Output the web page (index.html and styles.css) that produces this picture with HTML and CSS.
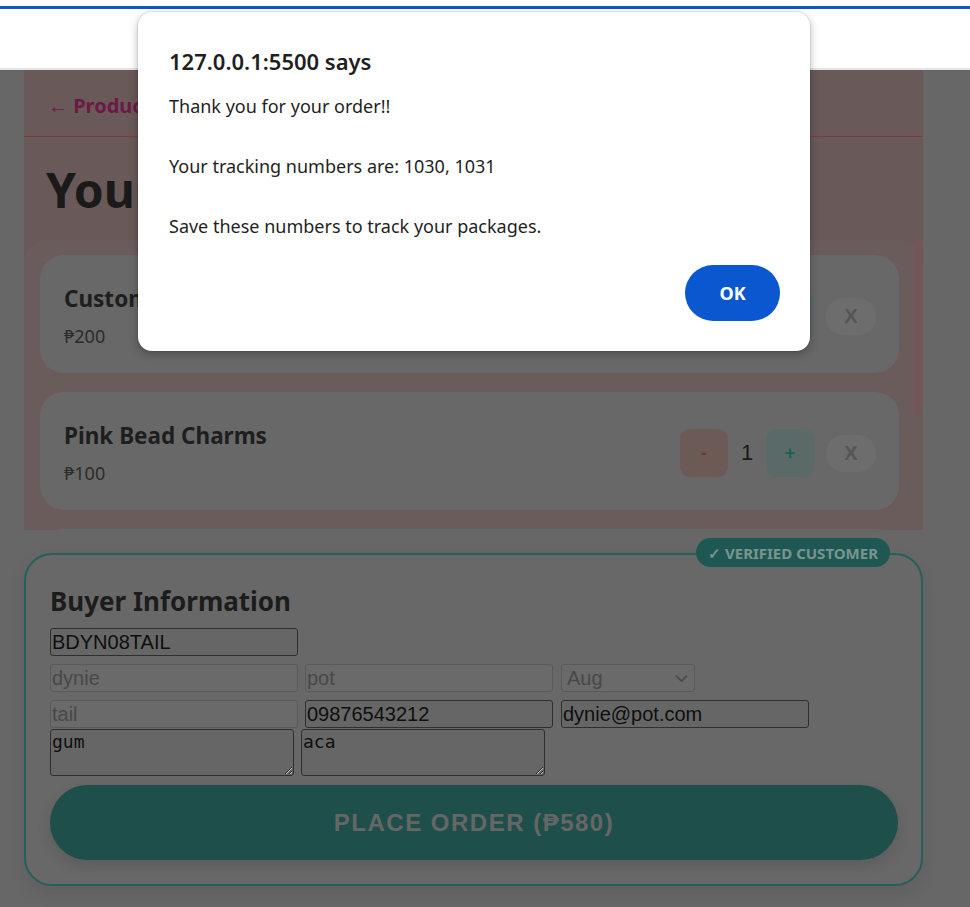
FILE: index.html
```html
<!DOCTYPE html>
<html lang="en">
<head>
    <meta charset="UTF-8">
    <meta name="viewport" content="width=device-width, initial-scale=1.0">
    <title>Your Cart</title>
    <link rel="stylesheet" href="styles.css">
</head>
<body>
    <div class="topbar">
        <div class="topbar-line"></div>
    </div>

    <main class="page">
        <section class="cart">
            <header class="cart-header">
                <a href="#" class="back-link">← Products</a>
            </header>
            <h1 class="cart-title">Your Cart</h1>

            <div class="cart-scroll">
                <div class="cart-list">
                    <div class="cart-item">
                        <div class="item-info">
                            <div class="item-name">Custom Name Bracelet</div>
                            <div class="item-price">₱200</div>
                        </div>
                        <div class="item-controls">
                            <button class="qty-btn minus">-</button>
                            <span class="qty">2</span>
                            <button class="qty-btn plus">+</button>
                            <button class="remove-btn">X</button>
                        </div>
                    </div>
                    <div class="cart-item">
                        <div class="item-info">
                            <div class="item-name">Pink Bead Charms</div>
                            <div class="item-price">₱100</div>
                        </div>
                        <div class="item-controls">
                            <button class="qty-btn minus">-</button>
                            <span class="qty">1</span>
                            <button class="qty-btn plus">+</button>
                            <button class="remove-btn">X</button>
                        </div>
                    </div>
                    <div class="cart-item">
                        <div class="item-info">
                            <div class="item-name">Star Keychain</div>
                            <div class="item-price">₱80</div>
                        </div>
                        <div class="item-controls">
                            <button class="qty-btn minus">-</button>
                            <span class="qty">1</span>
                            <button class="qty-btn plus">+</button>
                            <button class="remove-btn">X</button>
                        </div>
                    </div>
                </div>
                <div class="scrollbar">
                    <div class="scroll-thumb"></div>
                </div>
            </div>
        </section>

        <section class="buyer">
            <span class="badge">✓ VERIFIED CUSTOMER</span>
            <h2 class="buyer-title">Buyer Information</h2>

            <div class="row">
                <input class="field" type="text" value="BDYN08TAIL">
            </div>
            <div class="row">
                <input class="field" type="text" value="dynie" disabled>
                <input class="field" type="text" value="pot" disabled>
                <div class="field month">
                    <span>Aug</span>
                    <svg width="13" height="9" viewBox="0 0 13 9">
                        <path d="M1 1.5 L6.5 7 L12 1.5" fill="none" stroke="#474747" stroke-width="1.6"/>
                    </svg>
                </div>
            </div>
            <div class="row row-tight">
                <input class="field" type="text" value="tail" disabled>
                <input class="field" type="text" value="09876543212">
                <input class="field" type="email" value="dynie@pot.com">
            </div>
            <div class="row row-notes">
                <textarea class="note">gum</textarea>
                <textarea class="note">aca</textarea>
            </div>

            <button class="place-order">PLACE ORDER (₱580)</button>
        </section>
    </main>

    <div class="dialog">
        <div class="dialog-title">127.0.0.1:5500 says</div>
        <div class="dialog-text">Thank you for your order!!

Your tracking numbers are: 1030, 1031

Save these numbers to track your packages.</div>
        <div class="dialog-actions">
            <button class="ok-btn">OK</button>
        </div>
    </div>
</body>
</html>
```

FILE: styles.css
```css
* {
    margin: 0;
    padding: 0;
    box-sizing: border-box;
}

body {
    height: 907px;
    background: #676767;
    font-family: "Noto Sans", sans-serif;
    color: #1c1c1c;
    position: relative;
    overflow: hidden;
}

/* barre du haut */
.topbar {
    height: 70px;
    background: #fff;
    padding-top: 6px;
    border-bottom: 2px solid #e4e4e4;
}

.topbar-line {
    height: 3px;
    background: #0b57d0;
}

.page {
    padding: 0 47px 0 24px;
}

/* panier */
.cart {
    background: #695959;
}

.cart-header {
    height: 67px;
    display: flex;
    align-items: center;
    padding: 4px 24px 0;
    border-bottom: 1px solid #803a3c;
}

.back-link {
    color: #6a1a44;
    font-size: 20px;
    font-weight: 700;
    text-decoration: none;
}

.cart-title {
    font-size: 48px;
    line-height: 58px;
    font-weight: 700;
    color: #1a1a1a;
    margin: 24px 0 21px 22px;
}

.cart-scroll {
    height: 290px;
    display: flex;
    background: #6b5c5c;
    border-radius: 22px 22px 0 0;
}

.cart-list {
    flex: 1;
    overflow: hidden;
    display: flex;
    flex-direction: column;
    gap: 19px;
    padding: 15px 14px 15px 16px;
}

.scrollbar {
    width: 10px;
    padding: 0 1px;
}

.scroll-thumb {
    height: 175px;
    background: #72565a;
    border-radius: 4px;
}

.cart-item {
    flex-shrink: 0;
    height: 118px;
    display: flex;
    align-items: center;
    justify-content: space-between;
    padding: 4px 23px 0 24px;
    background: #686868;
    border-radius: 24px;
}

.item-name {
    font-size: 22.5px;
    line-height: 30px;
    font-weight: 700;
    color: #1e1e1e;
}

.item-price {
    font-size: 18px;
    line-height: 26px;
    margin-top: 9px;
    color: #2b2b2b;
}

.item-controls {
    display: flex;
    align-items: center;
    gap: 12px;
}

.qty-btn {
    width: 48px;
    height: 48px;
    border: none;
    border-radius: 10px;
    font-family: "Liberation Sans", sans-serif;
    font-size: 18px;
    font-weight: 700;
}

.minus {
    background: #6b5a55;
    color: #7a3630;
}

.plus {
    background: #5a6a68;
    color: #1c5f55;
}

.qty {
    width: 14px;
    text-align: center;
    font-family: "Liberation Sans", sans-serif;
    font-size: 22px;
    color: #1a1a1a;
}

.remove-btn {
    width: 50px;
    height: 37px;
    border: none;
    border-radius: 18px;
    background: #6d6d6d;
    color: #555;
    font-family: "Liberation Sans", sans-serif;
    font-size: 20px;
    font-weight: 700;
}

/* infos acheteur */
.buyer {
    position: relative;
    margin-top: 23px;
    padding: 29px 23px 24px 24px;
    border: 2px solid #25605a;
    border-radius: 28px;
    background: #686868;
    box-shadow: 0 8px 18px rgba(0, 0, 0, 0.08);
}

.badge {
    position: absolute;
    top: -17px;
    right: 31px;
    height: 29px;
    display: flex;
    align-items: center;
    padding: 0 12px;
    border-radius: 15px;
    background: #1f5852;
    color: #7a948f;
    font-size: 15px;
    font-weight: 700;
}

.buyer-title {
    font-size: 26px;
    line-height: 34px;
    font-weight: 700;
    color: #1c1c1c;
    margin-bottom: 10px;
}

.row {
    display: flex;
    gap: 7px;
    margin-bottom: 8px;
}

.row-tight {
    margin-bottom: 1px;
}

.field {
    width: 248px;
    height: 28px;
    padding: 0 1px;
    border: 1px solid #2f2f2f;
    border-radius: 3px;
    background: #666;
    color: #0f0f0f;
    font-family: "Liberation Sans", sans-serif;
    font-size: 20px;
}

.field:disabled {
    border-color: #5a5a5a;
    background: #6a6a6a;
    color: #484848;
    -webkit-text-fill-color: #484848;
}

.row .field:nth-child(3) {
    margin-left: 1px;
}

.month {
    width: 134px;
    display: flex;
    align-items: center;
    justify-content: space-between;
    padding: 0 6px 0 5px;
    border-color: #5a5a5a;
    background: #6a6a6a;
    color: #484848;
}

.note {
    width: 244px;
    height: 47px;
    padding: 1px 1px;
    border: 1px solid #2f2f2f;
    border-radius: 3px;
    background: #666;
    color: #0f0f0f;
    font-family: "DejaVu Sans Mono", monospace;
    font-size: 18px;
    line-height: 21px;
}

.place-order {
    display: block;
    width: 100%;
    height: 75px;
    margin-top: 9px;
    border: none;
    border-radius: 38px;
    background: #1f4f4a;
    color: #666;
    font-family: "Liberation Sans", sans-serif;
    font-size: 24px;
    font-weight: 700;
    letter-spacing: 1.5px;
    box-shadow: 0 6px 14px rgba(0, 0, 0, 0.12);
}

/* boîte d'alerte */
.dialog {
    position: absolute;
    left: 138px;
    top: 12px;
    width: 672px;
    height: 339px;
    display: flex;
    flex-direction: column;
    padding: 35px 30px 30px 31px;
    background: #fff;
    border-radius: 14px;
    box-shadow: 0 0 0 1px rgba(0, 0, 0, 0.07),
                0 3px 10px rgba(0, 0, 0, 0.28);
    color: #1f1f1f;
}

.dialog-title {
    font-size: 22px;
    line-height: 28px;
    font-weight: 600;
}

.dialog-text {
    margin-top: 16px;
    font-size: 18px;
    line-height: 30px;
    white-space: pre-line;
}

.dialog-actions {
    margin-top: auto;
    display: flex;
    justify-content: flex-end;
}

.ok-btn {
    width: 95px;
    height: 56px;
    border: none;
    border-radius: 28px;
    background: #0b57d0;
    color: #fff;
    font-family: "Noto Sans", sans-serif;
    font-size: 18px;
    font-weight: 700;
}
```
